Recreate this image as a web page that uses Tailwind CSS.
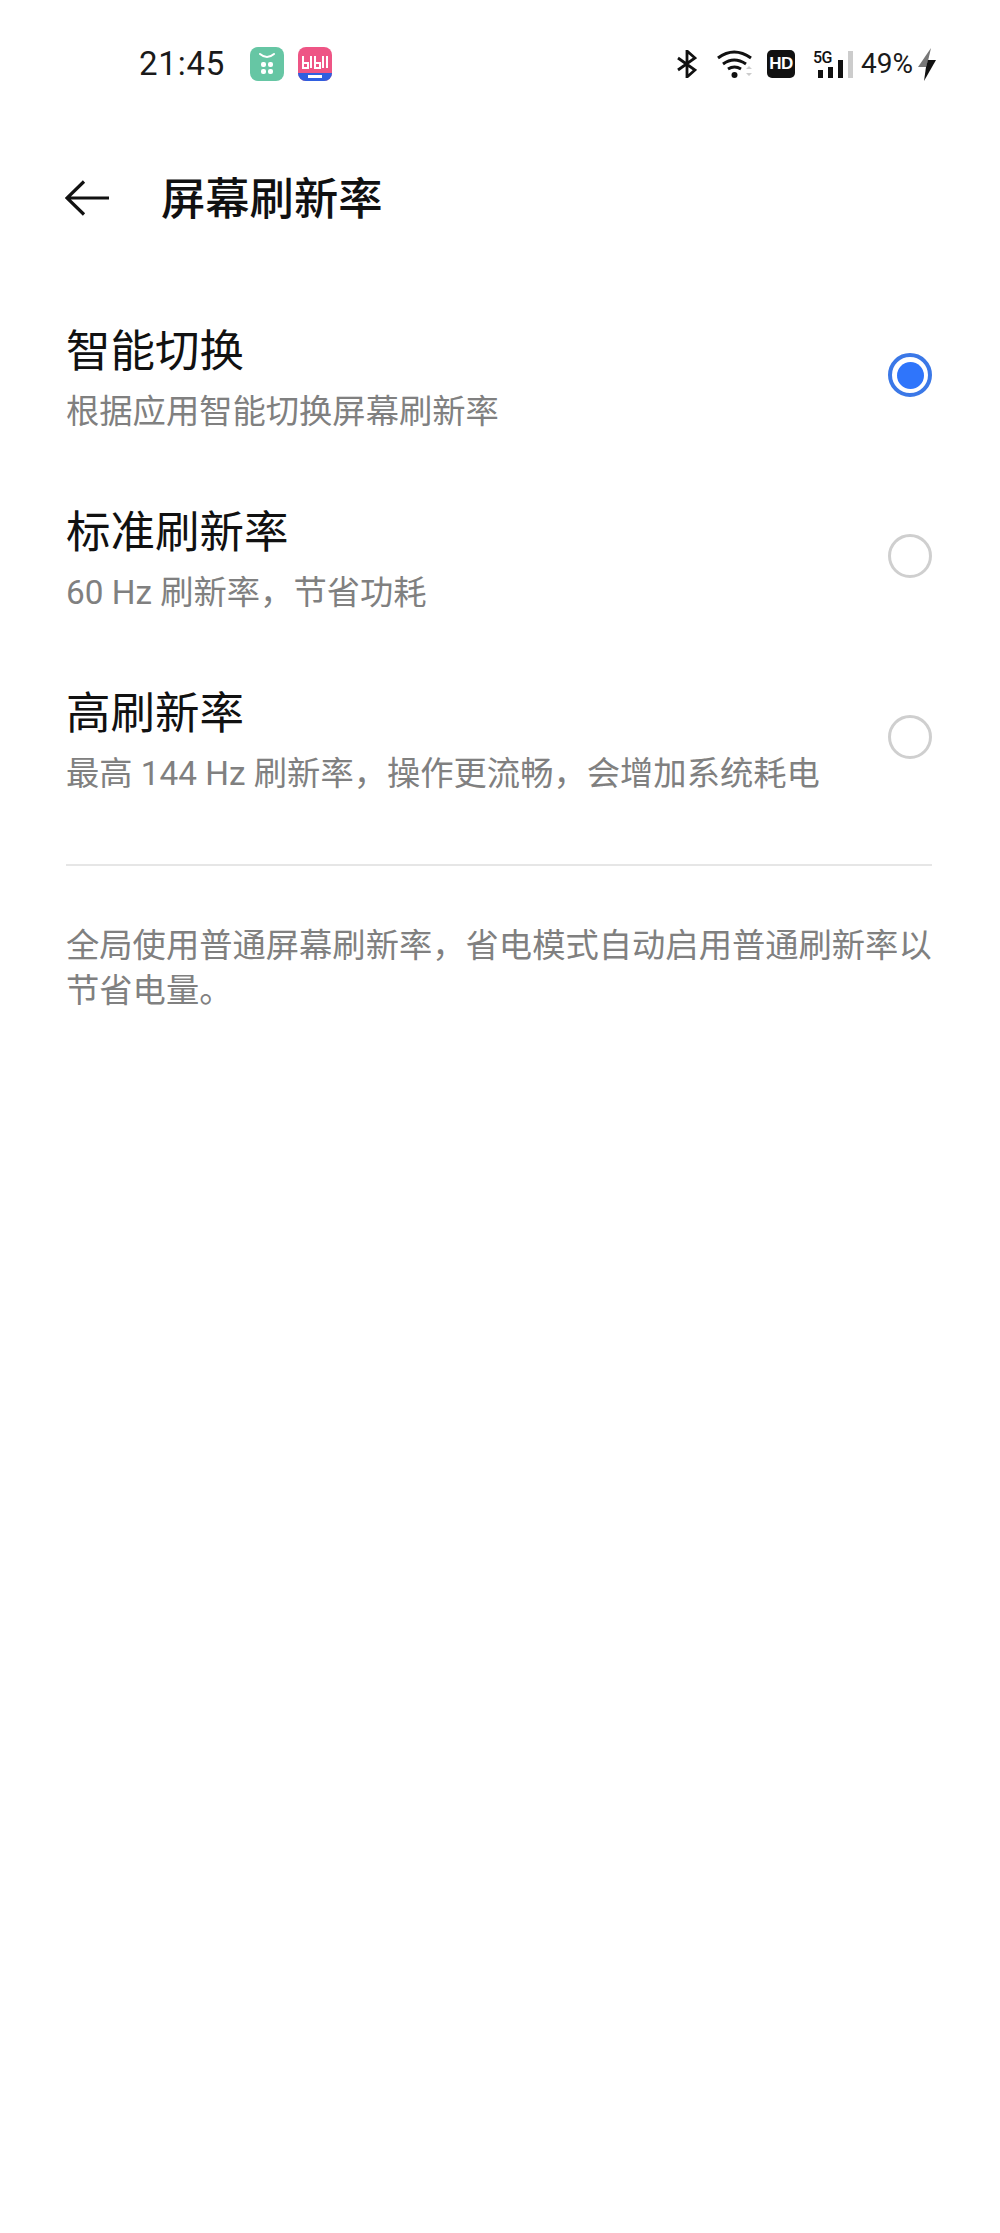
<!DOCTYPE html>
<html lang="zh">

<head>
    <meta charset="UTF-8">
    <script src="https://cdn.jsdelivr.net/npm/@tailwindcss/browser@4"></script>
    <title>屏幕刷新率</title>
</head>

<body class="bg-white w-[1000px] h-[2233px] overflow-hidden font-['Roboto','Noto_Sans_CJK_SC',sans-serif]">
    <!-- Status bar -->
    <div class="flex items-center justify-between h-[48px] mt-[40px] pl-[139px] pr-[64px]">
        <div class="flex items-center">
            <span class="text-[33px] leading-[48px] text-[#1a1a1a] w-[111px] tracking-[0.8px]">21:45</span>
            <svg class="w-[34px] h-[34px]" viewBox="0 0 34 34">
                <rect width="34" height="34" rx="8" fill="#66c6a4" />
                <path d="M10 7q7 6 14 0" fill="none" stroke="#fff" stroke-width="2" stroke-linecap="round" />
                <rect x="11" y="15" width="5" height="5" rx="2" fill="#fff" />
                <rect x="18" y="15" width="5" height="5" rx="2" fill="#fff" />
                <rect x="11" y="22" width="5" height="5" rx="2" fill="#fff" />
                <rect x="18" y="22" width="5" height="5" rx="2" fill="#fff" />
            </svg>
            <svg class="w-[34px] h-[34px] ml-[14px]" viewBox="0 0 34 34">
                <rect width="34" height="34" rx="8" fill="#ee5585" />
                <path d="M0 26h34v0a8 8 0 0 1-8 8H8a8 8 0 0 1-8-8z" fill="#2f5fe0" />
                <path d="M5 9v12h5v-5H6M13 9v12M17 9v12h5v-5h-4M25 9v12M29 9v12" fill="none" stroke="#fff" stroke-width="2" />
                <rect x="10" y="28" width="14" height="3" fill="#fff" />
            </svg>
        </div>
        <div class="flex items-center">
            <svg class="w-[20px] h-[28px]" viewBox="0 0 20 28">
                <path d="M1 8l17 12-8 7V1l8 7L1 20" fill="none" stroke="#111" stroke-width="2.800" />
            </svg>
            <svg class="w-[38px] h-[30px] ml-[20px]" viewBox="0 0 38 30">
                <path d="M1 9q16-12 33 0M6 15q11-8 23 0M11 20q6.500-4 13 0" fill="none" stroke="#111" stroke-width="3" />
                <circle cx="17.500" cy="26" r="3" fill="#111" />
                <path d="M29 20l3-3 3 3zM29 24l3 3 3-3z" fill="#ccc" />
            </svg>
            <div class="w-[28px] h-[28px] ml-[12px] rounded-[5px] bg-[#111] text-white text-[17px] leading-[28px] font-bold text-center tracking-[-0.5px] font-['Liberation_Sans',sans-serif]">HD</div>
            <div class="relative w-[40px] h-[28px] ml-[18px]">
                <span class="absolute left-0 top-0 text-[16px] leading-[15px] font-medium text-[#111] tracking-[-0.5px]">5G</span>
                <div class="absolute left-[5px] bottom-0 flex items-end gap-[5px]">
                    <i class="block w-[5px] h-[8px] bg-[#111]"></i>
                    <i class="block w-[5px] h-[11px] bg-[#111]"></i>
                    <i class="block w-[5px] h-[18px] bg-[#111]"></i>
                    <i class="block w-[5px] h-[27px] bg-[#ccc]"></i>
                </div>
            </div>
            <span class="ml-[8px] text-[28px] leading-[48px] text-[#1a1a1a]">49%</span>
            <svg class="w-[18px] h-[33px] ml-[5px]" viewBox="0 0 18 33">
                <path d="M13 0L0 19h8l2-6z" fill="#777" />
                <path d="M18 12H10L8 19 6 33z" fill="#111" />
            </svg>
        </div>
    </div>

    <!-- Title bar -->
    <div class="flex items-center h-[60px] mt-[80px] pl-[65px]">
        <svg class="w-[44px] h-[36px]" viewBox="0 0 44 36">
            <path d="M44 18H2M19 1.500L2 18l17 16.500" fill="none" stroke="#111" stroke-width="3.200" />
        </svg>
        <h1 class="ml-[52px] pt-[4px] text-[44.300px] leading-[60px] font-medium text-[#111]">屏幕刷新率</h1>
    </div>

    <!-- Options -->
    <div class="mt-[62px] pl-[66px] pr-[68px]">
        <div class="flex items-center justify-between h-[181px] pt-[32px] pb-[36px]">
            <div>
                <p class="text-[44.500px] leading-[60px] text-[#111]">智能切换</p>
                <p class="mt-[7px] text-[33.300px] leading-[46px] text-[#808080]">根据应用智能切换屏幕刷新率</p>
            </div>
            <div class="flex items-center justify-center size-[44px] mb-[7px] rounded-full border-[4px] border-[#3b78e7]">
                <div class="size-[27px] rounded-full bg-[#2f75fb]"></div>
            </div>
        </div>
        <div class="flex items-center justify-between h-[181px] pt-[32px] pb-[36px]">
            <div>
                <p class="text-[44.500px] leading-[60px] text-[#111]">标准刷新率</p>
                <p class="mt-[7px] text-[33.300px] leading-[46px] text-[#808080]">60 Hz 刷新率，节省功耗</p>
            </div>
            <div class="size-[44px] mb-[7px] rounded-full border-[3px] border-[#cfcfcf]"></div>
        </div>
        <div class="flex items-center justify-between h-[181px] pt-[32px] pb-[36px]">
            <div>
                <p class="text-[44.500px] leading-[60px] text-[#111]">高刷新率</p>
                <p class="mt-[7px] text-[33.300px] leading-[46px] text-[#808080]">最高 144 Hz 刷新率，操作更流畅，会增加系统耗电</p>
            </div>
            <div class="size-[44px] mb-[7px] rounded-full border-[3px] border-[#cfcfcf]"></div>
        </div>
        <div class="mt-[31px] h-[2px] bg-[#e6e6e6]"></div>
        <p class="mt-[57px] text-[33.300px] leading-[45px] text-[#808080]">全局使用普通屏幕刷新率，省电模式自动启用普通刷新率以节省电量。</p>
    </div>
</body>

</html>
